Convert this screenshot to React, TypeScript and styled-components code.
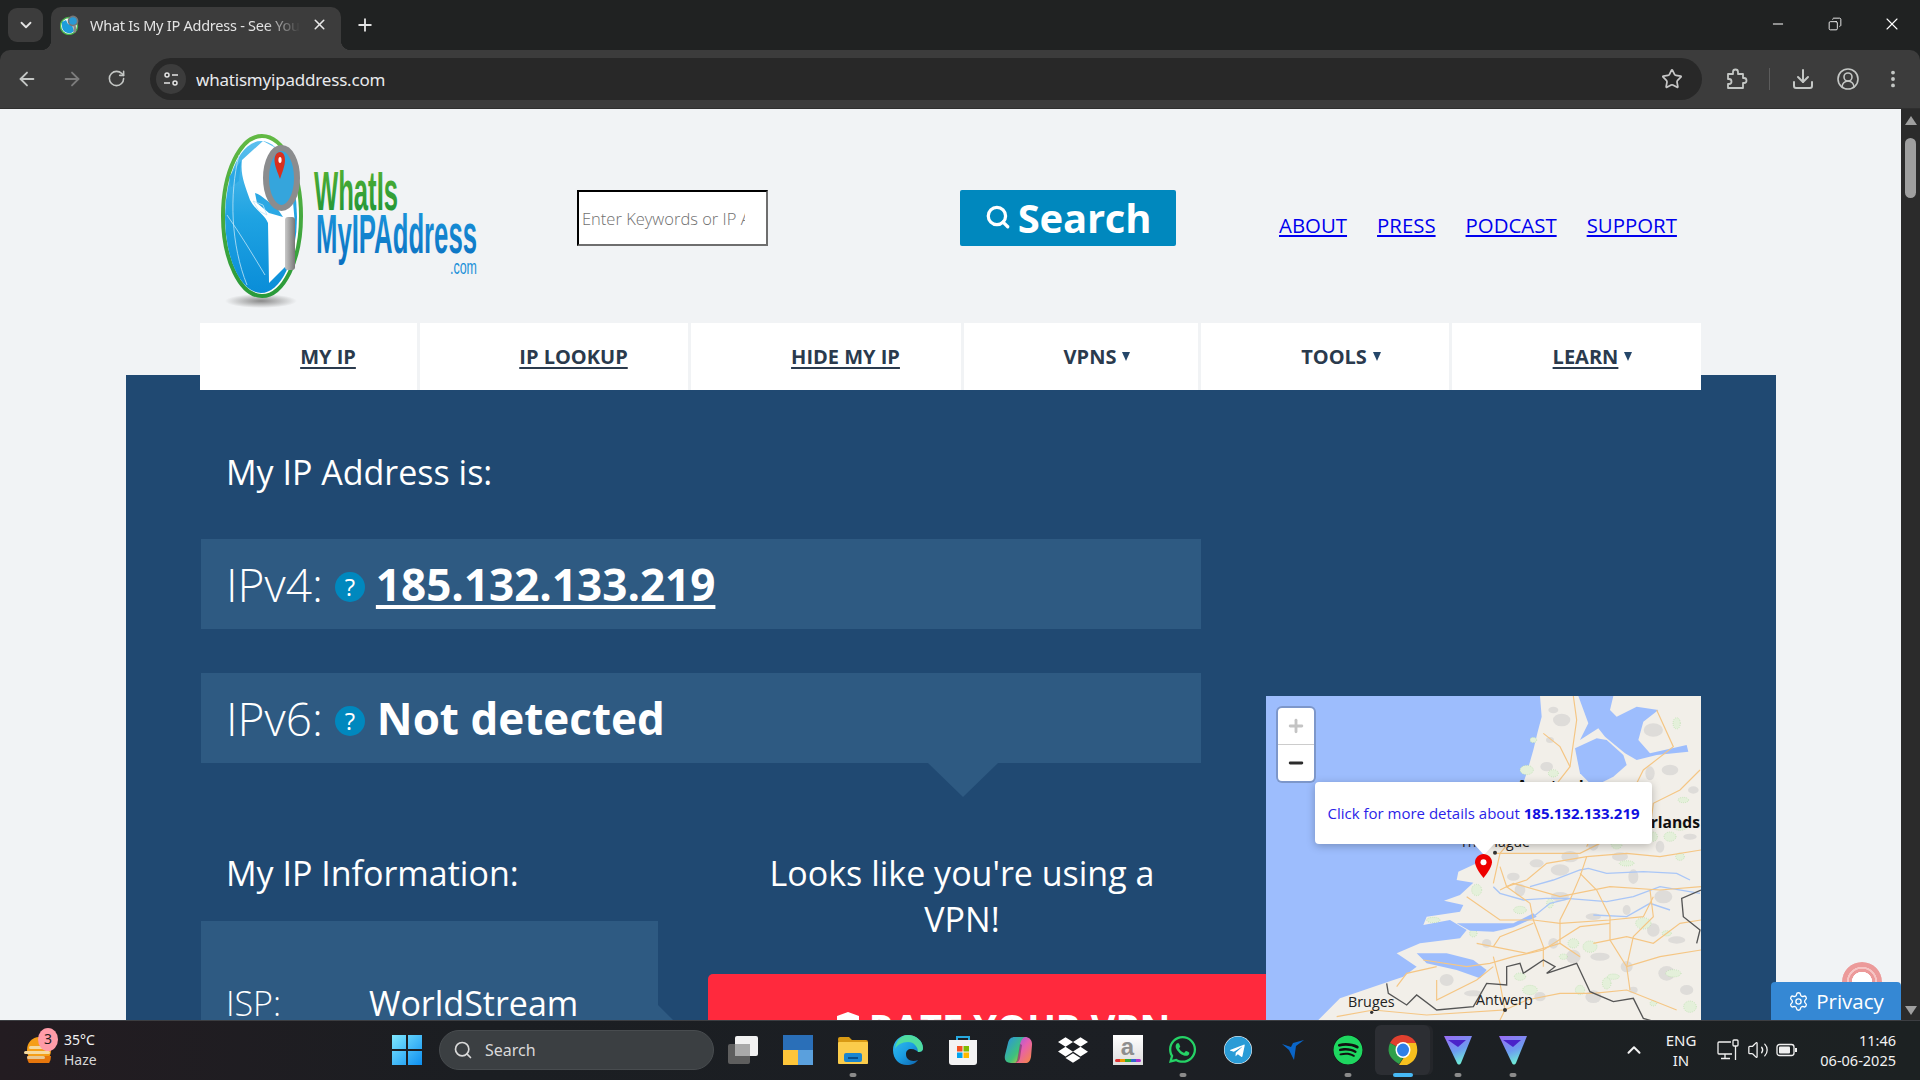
import React from "react";
import styled, { createGlobalStyle } from "styled-components";
import {
  ArrowLeft, ArrowRight, RotateCw, Star, MoreVertical, Search as SearchIcon, Settings,
  Plus, X, ChevronDown, ChevronUp, Minus, Volume2, Download, CircleUserRound, Copy,
} from "lucide-react";
import { FaWhatsapp, FaTelegram, FaSpotify, FaDropbox } from "react-icons/fa";

const Global = createGlobalStyle`
  html, body { margin: 0; padding: 0; width: 1920px; height: 1080px; overflow: hidden; background: #202222; }
  * { box-sizing: border-box; }
`;

const Screen = styled.div`
  width: 1920px; height: 1080px; display: flex; flex-direction: column; overflow: hidden;
  font-family: "Open Sans", "Liberation Sans", sans-serif;
`;

/* browser chrome */
const TitleBar = styled.div`
  height: 50px; flex: none; background: #202222; display: flex; align-items: flex-end; padding-left: 8px; position: relative;
`;
const TabToggle = styled.div`
  width: 35px; height: 34px; margin-bottom: 8px; border-radius: 9px; background: #3c3c3c; color: #e3e3e3;
  display: flex; align-items: center; justify-content: center;
`;
const Tab = styled.div`
  width: 290px; height: 43px; margin-left: 8px; background: #3c3c3c; border-radius: 10px 10px 0 0; position: relative;
  display: flex; align-items: center; padding: 0 10px 8px 9px; color: #e3e3e3;
  &::before, &::after { content: ""; position: absolute; bottom: 0; width: 10px; height: 10px; }
  &::before { left: -10px; background: radial-gradient(circle at 0 0, #202222 10px, #3c3c3c 10.5px); }
  &::after { right: -10px; background: radial-gradient(circle at 100% 0, #202222 10px, #3c3c3c 10.5px); }
`;
const TabTitle = styled.span`
  width: 210px; margin-left: 10px; white-space: nowrap; overflow: hidden; font: 400 14.5px "Noto Sans", sans-serif; letter-spacing: -0.25px;
  -webkit-mask-image: linear-gradient(to right, #000 175px, transparent 210px);
`;
const TabClose = styled.span`
  display: flex; margin-left: 11px; color: #e8e8e8;
`;
const NewTab = styled.span`
  display: flex; margin: 0 0 15px 14px; color: #e3e3e3;
`;
const WindowControls = styled.div`
  margin-left: auto; display: flex; height: 50px; color: #fff; padding-bottom: 2px;
`;
const WindowButton = styled.span`
  width: 57px; display: flex; align-items: center; justify-content: center;
`;
const Toolbar = styled.div`
  height: 59px; flex: none; background: #3c3c3c; border-radius: 10px 10px 0 0; display: flex; align-items: center;
  padding: 0 0 1px 0; color: #c4c7c5; border-bottom: 1px solid #2f2f2f;
`;
const NavIcon = styled.span<{ $dim?: boolean; $w?: number }>`
  width: ${(p) => p.$w ?? 46}px; display: flex; align-items: center; justify-content: center; flex: none;
  color: ${(p) => (p.$dim ? "#7c7c7c" : "#c4c7c5")};
`;
const AddressBar = styled.div`
  width: 1552px; height: 42px; margin-left: 8px; border-radius: 21px; background: #282828; display: flex; align-items: center; padding: 0 19px 0 6px; flex: none;
`;
const SiteInfo = styled.span`
  width: 30px; height: 30px; border-radius: 50%; background: #3c3c3c; display: flex; align-items: center; justify-content: center; color: #e3e3e3;
`;
const Url = styled.span`
  margin-left: 10px; padding-top: 1px; color: #e8eaed; font: 400 17px "Noto Sans", sans-serif; letter-spacing: -0.2px;
`;
const StarSlot = styled.span`
  margin-left: auto; display: flex; color: #c7c7c7;
`;
const ToolSep = styled.span`
  width: 1px; height: 22px; background: #5c5c5c; margin: 0 11px 0 0; flex: none;
`;

/* viewport */
const Viewport = styled.div`
  flex: 1; min-height: 0; display: flex; position: relative;
`;
const Page = styled.main`
  flex: 1; min-width: 0; background: #f1f3f5; overflow: hidden; position: relative;
`;
const ScrollTrack = styled.div`
  width: 19px; flex: none; background: #2b2b2b; position: relative; display: flex; flex-direction: column; align-items: center; justify-content: space-between; padding: 7px 0 5px;
`;
const ScrollThumb = styled.div`
  position: absolute; top: 29px; left: 4px; width: 11px; height: 60px; border-radius: 6px; background: #9f9f9f;
`;
const ScrollArrow = styled.div<{ $down?: boolean }>`
  width: 0; height: 0; border-left: 6px solid transparent; border-right: 6px solid transparent;
  ${(p) => (p.$down ? "border-top: 9px solid #9f9f9f;" : "border-bottom: 9px solid #9f9f9f;")}
`;

/* site header */
const SiteHeader = styled.header`
  height: 214px; padding: 16px 0 0 215px; display: flex; align-items: flex-start;
`;
const LogoSvg = styled.svg`
  width: 270px; height: 185px; flex: none; display: block;
`;
const SearchInput = styled.input`
  width: 191px; height: 56px; margin: 65px 0 0 92px; padding: 0 21px 0 3px; border-width: 2px; border-style: inset; border-color: #1f1f1f #6e6e6e #6e6e6e #1f1f1f;
  background: #fff; font: 300 16.5px "Open Sans", sans-serif; color: #333; outline: none;
  &::placeholder { color: #6f6f6f; opacity: 1; }
`;
const SearchButton = styled.button`
  width: 216px; height: 56px; margin: 65px 0 0 192px; border: none; border-radius: 2px; background: #0088be; color: #fff;
  font: 700 40px "Open Sans", sans-serif; display: flex; align-items: center; justify-content: center; gap: 7px; padding: 0 0 2px; letter-spacing: -0.2px;
`;
const TopLinks = styled.nav`
  margin: 86px 0 0 103px; display: flex; gap: 30px;
`;
const TopLink = styled.a`
  color: #0000ee; text-decoration: underline; font: 400 20.4px/28px "Open Sans", sans-serif;
`;

/* nav */
const MainNav = styled.nav`
  width: 1501px; height: 67px; margin-left: 200px; display: grid; grid-template-columns: 217px 3px 268px 3px 270px 3px 234px 3px 248px 3px 249px;
  position: relative; z-index: 1; background: #f1f3f5;
`;
const NavCell = styled.div<{ $caret?: boolean }>`
  background: #fff; display: flex; align-items: center; justify-content: center; padding-left: ${(p) => (p.$caret ? 32 : 39)}px; gap: 6px;
  color: #2a3a4d; font: 700 20px "Open Sans", sans-serif;
`;
const NavLabel = styled.span<{ $u?: boolean }>`
  text-decoration: ${(p) => (p.$u ? "underline" : "none")}; text-underline-offset: 3px;
`;
const NavCaret = styled.span`
  width: 0; height: 0; border-left: 4px solid transparent; border-right: 4px solid transparent; border-top: 9px solid #24476a;
`;

/* content */
const Panel = styled.section`
  width: 1650px; margin: -15px 0 0 126px; height: 700px; background: #204972; padding: 74px 0 0 75px; color: #fff;
  display: grid; grid-template-columns: 1065px 435px; align-items: start;
`;
const LeftColumn = styled.div``;
const Heading = styled.h2`
  margin: 0; padding-left: 25px; font: 400 34px/46px "Open Sans", sans-serif;
`;
const IpBox = styled.div<{ $arrow?: boolean }>`
  width: 1000px; height: 90px; margin-top: 44px; background: #2e5a82; display: flex; align-items: center; padding: 0 0 0 25px; position: relative;
  ${(p) =>
    p.$arrow
      ? `&::after { content: ""; position: absolute; top: 100%; left: 727px; border-left: 35px solid transparent; border-right: 35px solid transparent; border-top: 34px solid #2e5a82; }`
      : ""}
`;
const IpLabel = styled.span`
  font: 300 46px "Open Sans", sans-serif;
`;
const HelpBadge = styled.span`
  width: 30px; height: 30px; margin: 6px 11px 0 12px; border-radius: 50%; background: #0088be; color: #fff; font: 400 24px/30px "Open Sans", sans-serif; text-align: center; flex: none;
`;
const IpLink = styled.a`
  color: #fff; font: 700 44px "Open Sans", sans-serif; text-decoration: underline; text-decoration-thickness: 4px; text-underline-offset: 4px;
`;
const IpValue = styled.strong`
  font: 700 44px "Open Sans", sans-serif; margin-left: 1px;
`;
const InfoRow = styled.div`
  display: flex; margin-top: 87px;
`;
const InfoColumn = styled.div`
  width: 507px; flex: none;
`;
const InfoCard = styled.div`
  width: 480px; height: 160px; margin-top: 25px; background: #2e5a82; padding: 59px 0 0 25px; display: flex;
  clip-path: polygon(0 0, 457px 0, 457px 84px, 480px 107px, 480px 160px, 0 160px);
`;
const InfoKey = styled.span`
  width: 143px; font: 300 34px/46px "Open Sans", sans-serif;
`;
const InfoValue = styled.span`
  font: 400 34px/46px "Open Sans", sans-serif;
`;
const VpnColumn = styled.div`
  width: 558px; flex: none;
`;
const VpnText = styled.p`
  margin: 0 100px 0 50px; text-align: center; font: 400 34px/46px "Open Sans", sans-serif;
`;
const RateButton = styled.div`
  width: 590px; height: 100px; margin-top: 32px; background: #ff293d; border-radius: 5px 5px 0 0; display: flex; justify-content: center; align-items: flex-start; gap: 9px; padding-top: 28px;
  font: 700 38px/50px "Open Sans", sans-serif; color: #fff;
`;
const MapFrame = styled.div`
  width: 435px; height: 400px; margin-top: 247px; position: relative; z-index: 1; background: #9dbdfd; overflow: hidden;
`;
const MapSvg = styled.svg`
  display: block; width: 435px; height: 400px;
`;
const ZoomControl = styled.div`
  position: absolute; left: 12px; top: 12px; width: 36px; height: 73px; background: #fff; border-radius: 4px; box-shadow: 0 0 0 2px rgba(0,0,0,.2); display: flex; flex-direction: column;
`;
const ZoomButton = styled.span<{ $off?: boolean }>`
  flex: 1; display: flex; align-items: center; justify-content: center; color: ${(p) => (p.$off ? "#c4c4c4" : "#2c2c2c")};
  & + & { border-top: 1px solid #ccc; }
`;
const Popup = styled.div`
  position: absolute; left: 49px; top: 86px; width: 337px; height: 62px; background: #fff; border-radius: 4px; box-shadow: 0 2px 8px rgba(0,0,0,.25);
  display: flex; align-items: center; justify-content: center; font: 400 15px "Open Sans", sans-serif; color: #2b1fe8; white-space: pre;
  &::after { content: ""; position: absolute; top: 100%; left: 159px; border-left: 10px solid transparent; border-right: 10px solid transparent; border-top: 11px solid #fff; }
  strong { color: #1010e0; font-weight: 700; }
`;
const Marker = styled.svg`
  position: absolute; left: 209px; top: 158px; width: 17px; height: 24px;
`;
const PrivacyBadge = styled.div`
  position: absolute; right: 0; bottom: 0; width: 130px; height: 38px; background: #3588d4; border-radius: 4px 4px 0 0; color: #fff; display: flex; align-items: center; justify-content: center; gap: 7px; font: 400 20.5px "Open Sans", sans-serif; z-index: 3;
`;
const AlertRings = styled.div`
  position: absolute; right: 19px; bottom: 38px; width: 40px; height: 20px; z-index: 2; border-radius: 20px 20px 0 0;
  background: radial-gradient(circle at 50% 100%, #fff 0 10px, #ec9a9a 10.5px 13px, #f6c5c5 13.5px 15px, #ec9a9a 15.5px 20px, transparent 20.5px);
`;

/* taskbar */
const Taskbar = styled.footer`
  height: 60px; flex: none; position: relative; display: flex; align-items: center; color: #f2f2f2; padding-bottom: 2px;
  background: linear-gradient(90deg, #231c21 0, #1b1e22 25%, #1c1f24 60%, #1c2122 100%); border-top: 1px solid #3c3e42;
  font-family: "Noto Sans", "Open Sans", sans-serif;
`;
const Weather = styled.div`
  width: 116px; height: 100%; padding-left: 24px; display: flex; align-items: center; flex: none; position: relative;
`;
const WeatherBadge = styled.span`
  position: absolute; left: 38px; top: 7px; width: 20px; height: 23px; border-radius: 50%; background: #ff9ca8; color: #1d1d1d; font-size: 14px; line-height: 22px; text-align: center;
`;
const WeatherText = styled.div`
  margin-left: 12px; font-size: 14px; line-height: 20px; white-space: nowrap; span { display: block; color: #d6d6d6; }
`;
const StartIcon = styled.svg`
  width: 30px; height: 30px; margin-left: 276px; flex: none;
`;
const TaskSearch = styled.div`
  width: 275px; height: 40px; margin-left: 17px; flex: none; border-radius: 20px; background: #3b3f42; border: 1px solid #484c4f; display: flex; align-items: center; gap: 12px; padding-left: 13px; color: #d9d9d9; font-size: 16px;
`;
const TaskApps = styled.div`
  display: flex; margin-left: 1px; height: 100%;
`;
const TaskApp = styled.div<{ $on?: boolean }>`
  width: 55px; height: 100%; display: flex; align-items: center; justify-content: center; position: relative; flex: none;
  ${(p) => (p.$on ? `&::before { content: ""; position: absolute; left: 0; right: 0; top: 4px; bottom: 3px; background: #2c2e33; border-radius: 6px; box-shadow: 3px 0 0 #24262a; }` : "")}
  > * { position: relative; }
`;
const RunDot = styled.span<{ $on?: boolean }>`
  position: absolute !important; bottom: 1px; left: 50%; height: 4px; border-radius: 2px; transform: translateX(-50%);
  width: ${(p) => (p.$on ? 20 : 7)}px; background: ${(p) => (p.$on ? "#47b9f5" : "#8b8b8b")};
`;
const Tray = styled.div`
  position: absolute; right: 0; top: 0; bottom: 2px; display: flex; align-items: center;
`;
const TrayLang = styled.div`
  width: 32px; margin-left: 20px; text-align: center; font-size: 15px; line-height: 20px;
`;
const TrayIcons = styled.div`
  display: flex; align-items: center; gap: 7px; margin-left: 20px;
`;
const Clock = styled.div`
  width: 90px; margin: 0 24px 0 8px; text-align: right; font-size: 14.5px; line-height: 20px; white-space: nowrap;
`;
const AmazonTile = styled.div`
  width: 30px; height: 30px; background: linear-gradient(#fff, #ddd); color: #8e8e8e; font: 700 24px/24px "Liberation Sans", sans-serif; text-align: center; position: relative;
  i { position: absolute; left: 2px; right: 2px; bottom: 3px; height: 3px; background: linear-gradient(90deg,#d33 0 20%,#e90 20% 40%,#3a3 40% 60%,#36c 60% 80%,#a3c 80%); border-radius: 2px; }
`;

const Globe = ({ size = 20 }: { size?: number }) => (
  <svg width={size} height={size} viewBox="0 0 20 20">
    <circle cx="9" cy="11" r="8.5" fill="#fff" stroke="#45b04a" strokeWidth="1.4" />
    <path d="M2 11a7 7 0 0 0 12 5l-2-6-4-1-2-4-4 2z" fill="#1d9ddc" />
    <circle cx="13" cy="6" r="4.6" fill="#2a9ad4" stroke="#777" strokeWidth="1.6" />
    <rect x="13.4" y="10.5" width="2.6" height="7" rx="1" fill="#888" />
  </svg>
);

const Logo = () => (
  <LogoSvg viewBox="0 0 270 185">
    <defs>
      <linearGradient id="gr" x1="0" y1="0" x2="0" y2="1"><stop offset="0" stopColor="#5cb531" /><stop offset="1" stopColor="#18913a" /></linearGradient>
      <linearGradient id="bl" x1="0" y1="0" x2="0" y2="1"><stop offset="0" stopColor="#1d9ade" /><stop offset="1" stopColor="#0a6fc0" /></linearGradient>
      <linearGradient id="gb" x1="0" y1="0" x2="0" y2="1"><stop offset="0" stopColor="#5cc0ee" /><stop offset=".5" stopColor="#1fa3e2" /><stop offset="1" stopColor="#0a8dd8" /></linearGradient>
      <linearGradient id="rg" x1="0" y1="0" x2="0" y2="1"><stop offset="0" stopColor="#62b944" /><stop offset="1" stopColor="#2a9a3a" /></linearGradient>
      <radialGradient id="sh"><stop offset="0" stopColor="#8a8a8a" /><stop offset="1" stopColor="#f1f3f5" /></radialGradient>
      <linearGradient id="hn" x1="0" y1="0" x2="1" y2="0"><stop offset="0" stopColor="#c9c9c9" /><stop offset="1" stopColor="#777" /></linearGradient>
    </defs>
    <ellipse cx="46" cy="176" rx="36" ry="7" fill="url(#sh)" />
    <ellipse cx="47" cy="91" rx="39" ry="80" fill="#fff" stroke="url(#rg)" strokeWidth="4" />
    <ellipse cx="46" cy="92" rx="36" ry="76" fill="url(#gb)" />
    <path d="M27 35 L48 16 L74 30 L80 100 L72 140 L54 158 L53 98 C50 90 40 85 35 75 C30 60 25 50 27 35z" fill="#fff" />
    <path d="M14 52l12-16-2 20-8 6zM40 68c8 2 12 10 20 12l8 12-14-4-12-10z" fill="#2ba8e4" />
    <path d="M38 76l10 4 4 10-8-4zM12 90c14 20 26 40 38 60M24 30c-10 40-8 90 8 130" fill="none" stroke="#bfe4f6" strokeWidth=".8" />
    <ellipse cx="66.5" cy="53" rx="15.5" ry="30" fill="#35a5dc" stroke="#8b8c8e" strokeWidth="6" />
    <path d="M65 27c-3.6 0-5.5 4-5.5 8 0 6 3.5 13 5.5 19 2-6 5-13 5-19 0-4-1.5-8-5-8z" fill="#d9301e" />
    <ellipse cx="65" cy="35" rx="1.6" ry="3" fill="#fff" />
    <rect x="70" y="92" width="10" height="53" rx="3" fill="url(#hn)" />
    <text x="99" y="85" fontFamily="Liberation Sans" fontWeight="700" fontSize="56" fill="url(#gr)" textLength="84" lengthAdjust="spacingAndGlyphs">WhatIs</text>
    <text x="101" y="128" fontFamily="Liberation Sans" fontWeight="700" fontSize="56" fill="url(#bl)" textLength="161" lengthAdjust="spacingAndGlyphs">MyIPAddress</text>
    <text x="235" y="149" fontFamily="Liberation Sans" fontSize="21" fill="#1a8fd8" textLength="27" lengthAdjust="spacingAndGlyphs">.com</text>
  </LogoSvg>
);

const grey = "870,150 860,230 905,90 880,60 835,300 1180,120 1120,100 1230,240 1170,250 830,520 900,540 1000,460 1080,500 1200,470 1290,440 900,620 780,600 1000,680 1100,660 1180,720 1250,750 880,760 940,800 1020,800 1100,830 1220,850 680,760 560,870 640,910 840,920 1000,920 1120,900 1280,900 1210,620 1300,300 1120,300 1040,400 760,560 930,500 1120,560".split(" ").map((s) => s.split(",").map(Number));
const green = "820,150 880,250 800,240 1250,100 1270,330 1260,410 1180,440 1070,460 1100,520 1260,500 1230,440 1150,700 1220,730 780,660 870,640 650,600 520,690 640,730 940,760 990,770 910,800 780,860 810,900 1040,880 1060,860 1240,850 960,900 1290,950 1180,940".split(" ").map((s) => s.split(",").map(Number));
const roads = [
  "940,18 950,90 930,230 860,320 780,420 720,490 700,580",
  "1190,60 1240,170 1150,240 1120,300 1040,330 980,470",
  "1320,240 1260,300 1180,340 1170,420 1060,440 960,490 840,490 700,490",
  "720,530 740,590 800,570 860,520 980,500 1100,490 1200,500 1323,480",
  "980,500 960,560 930,630 900,690 900,760 960,800",
  "960,550 1010,600 1050,680 1050,750 1100,830 1110,900",
  "740,590 810,640 820,690 850,770 850,830",
  "720,600 760,580 900,620 1050,590 1200,600 1323,590",
  "620,620 720,690 820,690 900,700 1050,690 1150,680 1180,620",
  "700,770 720,740 820,700",
  "490,810 620,830 690,820 760,800 850,780 960,710 1050,700",
  "530,870 530,930 650,870 700,830",
  "1170,600 1180,680 1120,740 1100,830 1200,800 1323,780",
  "735,960 800,930 900,910 1000,910 1100,900 1250,960",
  "735,960 720,880 700,800",
  "230,980 340,960 500,975 735,960 720,990",
  "410,890 440,850 530,830",
  "1000,760 1100,740 1180,760 1260,700 1323,690",
  "900,760 800,790 700,770 650,760",
  "850,130 900,170 930,230",
];
const rivers = [
  "810,590 880,570 960,540 985,535 1040,550 1150,545 1250,550 1290,570",
  "700,590 720,610 790,630 860,625 920,625 1040,635 1120,620 1200,590 1320,610",
  "1000,675 1100,680 1170,640 1230,660",
  "820,680 870,640 930,625",
];

const LeafletMap = () => (
  <MapSvg viewBox="18 18 1305 1200">
    <path
      d="M840 18 L845 80 L832 130 L820 180 L800 250 L775 320 L730 400 L690 470 L650 520 L595 545 L590 570 L640 578 L600 615 L552 632 L610 645 L600 665 L500 680 L490 705 L570 690 L620 720 L600 745 L480 760 L410 790 L470 830 L430 860 L385 875 L240 925 L175 990 L175 1218 L1323 1218 L1323 18 Z"
      fill="#f2efe9"
    />
    {grey.map(([x, y], i) => (
      <ellipse key={i} cx={x} cy={y} rx={12 + ((i * 7) % 18)} ry={9 + ((i * 5) % 14)} fill="#dedcd9" />
    ))}
    {green.map(([x, y], i) => (
      <ellipse key={i} cx={x} cy={y} rx={10 + ((i * 5) % 14)} ry={8 + ((i * 3) % 12)} fill="#e4f0da" stroke="#a6da98" strokeWidth="2" strokeDasharray="2 4" />
    ))}
    <path
      d="M955 18 L985 100 L960 150 L1015 115 L1035 140 L1095 190 L1130 210 L1190 195 L1285 185 L1280 165 L1170 190 L1135 150 L1150 95 L1195 60 L1130 50 L1070 80 L1050 60 L1060 18 Z"
      fill="#9dbdfd"
    />
    <path d="M945 175 L1010 145 L1040 150 L1090 195 L1100 225 L1060 260 L1000 290 L960 250 Z" fill="#9dbdfd" />
    <path d="M470 790 L560 790 L640 810 L680 840 L660 865 L590 840 L500 820 Z" fill="#9dbdfd" />
    <path d="M590 700 L720 700 L760 700 L820 670 L830 680 L760 712 L700 725 L630 722 Z" fill="#9dbdfd" />
    {rivers.map((p, i) => (
      <polyline key={i} points={p} fill="none" stroke="#a9c6f7" strokeWidth="4" />
    ))}
    {roads.map((p, i) => (
      <polyline key={i} points={p} fill="none" stroke="#f5c684" strokeWidth="3.5" />
    ))}
    <polyline
      points="380,880 385,910 440,945 470,915 530,960 640,950 680,880 740,885 740,830 780,820 790,850 850,810 885,830 860,850 950,820 990,905 1060,935 1120,925 1150,985 1200,1000"
      fill="none" stroke="#555" strokeWidth="4"
    />
    <polyline points="1323,600 1265,625 1270,680 1320,720 1310,760" fill="none" stroke="#555" strokeWidth="4" />
    <text x="600" y="472" fontFamily="Open Sans" fontSize="42" fill="#222">The Hague</text>
    <circle cx="705" cy="488" r="6" fill="#333" />
    <text x="1172" y="414" fontFamily="Open Sans" fontWeight="700" fontSize="47" fill="#111">rlands</text>
    <text x="770" y="305" fontFamily="Open Sans" fontWeight="700" fontSize="47" fill="#111">Amsterdam</text>
    <text x="264" y="952" fontFamily="Open Sans" fontSize="43" fill="#222">Bruges</text>
    <circle cx="335" cy="967" r="5" fill="#333" />
    <text x="648" y="945" fontFamily="Open Sans" fontSize="43" fill="#222">Antwerp</text>
    <circle cx="735" cy="960" r="6" fill="#333" />
  </MapSvg>
);

const PuzzleIcon = () => (
  <svg width="24" height="24" viewBox="0 0 24 24" fill="none" stroke="currentColor" strokeWidth="1.8" strokeLinejoin="round">
    <path d="M4 7h5V5a2.5 2.5 0 0 1 5 0v2h5v4h1a2.5 2.5 0 0 1 0 5h-1v5H4v-4h1a2.5 2.5 0 0 0 0-5H4z" />
  </svg>
);
const TaskViewIcon = () => (
  <svg width="30" height="28" viewBox="0 0 30 28">
    <rect x="0" y="8" width="22" height="20" rx="2" fill="#5e5e5e" />
    <rect x="7" y="0" width="23" height="20" rx="2" fill="#f2f2f2" />
    <rect x="7" y="8" width="15" height="12" fill="#a9a9a9" />
  </svg>
);
const EdgeIcon = () => (
  <svg width="30" height="32" viewBox="0 0 30 32">
    <defs><linearGradient id="ed" x1="0" y1="0" x2="1" y2="1"><stop offset="0" stopColor="#35c1f1" /><stop offset=".5" stopColor="#1b9de2" /><stop offset="1" stopColor="#0c59a4" /></linearGradient></defs>
    <path d="M15 1C6 1 0 8 0 16c0 9 6 15 14 15 5 0 9-2 11-5-5 2-12 1-12-6 0-3 2-5 5-5 4 0 6 2 7 3 3 0 5-1 5-4C30 7 23 1 15 1z" fill="url(#ed)" />
    <path d="M15 1c8 0 15 6 15 13 0 3-2 4-5 4 0-5-4-10-10-10-6 0-11 3-13 7C3 7 8 1 15 1z" fill="#4fdca0" />
  </svg>
);
const ChromeIcon = () => (
  <svg width="30" height="32" viewBox="0 0 30 32">
    <path d="M15 16L2 9C5 3 10 1 15 1s11 3 13 8H15z" fill="#e0402f" />
    <path d="M15 16L2 9c-3 7-2 15 9 21l6-9z" fill="#2fa04a" />
    <path d="M15 9h13c3 8 1 18-9 22h-8l7-11z" fill="#f6bf1e" />
    <ellipse cx="15" cy="16" rx="7.5" ry="8" fill="#fff" />
    <ellipse cx="15" cy="16" rx="6" ry="6.5" fill="#2f7fe8" />
  </svg>
);
const ProtonIcon = ({ id }: { id: string }) => (
  <svg width="30" height="32" viewBox="0 0 30 32">
    <defs><linearGradient id={id} x1="0" y1="0" x2="0.4" y2="1"><stop offset="0" stopColor="#9a6bf5" /><stop offset=".6" stopColor="#6d9cf0" /><stop offset="1" stopColor="#6fe7d8" /></linearGradient></defs>
    <path d="M1 2h28l-11 27c-1 2-3 2-4 0z" fill={`url(#${id})`} />
    <path d="M5 6h18l-8 7z" fill="#4a23c9" />
  </svg>
);
const WidgetsIcon = () => (
  <svg width="30" height="30" viewBox="0 0 30 30">
    <rect width="30" height="15" fill="#2a6fb8" />
    <rect y="15" width="15" height="15" fill="#fdc53a" />
    <rect x="15" y="15" width="15" height="15" fill="#5aa0dd" />
  </svg>
);
const ExplorerIcon = () => (
  <svg width="30" height="28" viewBox="0 0 30 28">
    <path d="M0 3a2 2 0 0 1 2-2h9l3 3h14a2 2 0 0 1 2 2v20a2 2 0 0 1-2 2H2z" fill="#d99a14" />
    <rect y="6" width="30" height="22" rx="1" fill="#fbcc4b" />
    <rect x="6" y="17" width="18" height="9" rx="2" fill="#1a86d0" />
    <rect x="10" y="21" width="10" height="2" fill="#0a4f8a" />
  </svg>
);
const StoreIcon = () => (
  <svg width="30" height="32" viewBox="0 0 30 32">
    <path d="M9 6V3h12v3" fill="none" stroke="#27a9e0" strokeWidth="2" />
    <path d="M1 6h28v22a3 3 0 0 1-3 3H4a3 3 0 0 1-3-3z" fill="#f3f3f3" />
    <rect x="9" y="12" width="5.5" height="5.5" fill="#f25022" />
    <rect x="15.5" y="12" width="5.5" height="5.5" fill="#7fba00" />
    <rect x="9" y="18.5" width="5.5" height="5.5" fill="#00a4ef" />
    <rect x="15.5" y="18.5" width="5.5" height="5.5" fill="#ffb900" />
  </svg>
);
const CopilotIcon = () => (
  <svg width="30" height="30" viewBox="0 0 30 30">
    <defs>
      <linearGradient id="c1" x1="0" y1="0" x2="1" y2="1"><stop offset="0" stopColor="#2a8fe8" /><stop offset=".6" stopColor="#3ec27a" /><stop offset="1" stopColor="#f4c12b" /></linearGradient>
      <linearGradient id="c2" x1="0" y1="0" x2="1" y2="1"><stop offset="0" stopColor="#7a5cf0" /><stop offset=".5" stopColor="#e65fb0" /><stop offset="1" stopColor="#f78a3c" /></linearGradient>
    </defs>
    <path d="M20 2c-3 0-5 2-5.5 5L12 23c-.5 3-2 5-4 5h14c4 0 5-2 6-6l1-12c.5-5-3-8-7-8z" fill="url(#c2)" />
    <path d="M12 2c-4 0-6 2-7 6L2 20c-1 5 1 8 6 8h3c2 0 4-2 4-5l2-13c.5-4 2-7 5-8z" fill="url(#c1)" />
    <path d="M17 9l-2.5 14c-.3 2-1 3.5-2 4.5 2 0 4-1.5 4.5-4.5L19 10z" fill="#1c1f24" opacity=".35" />
  </svg>
);
const BirdIcon = () => (
  <svg width="22" height="24" viewBox="0 0 22 24">
    <path d="M0 6l9 3 2-4 11-3-8 6-2 14-5-10z" fill="#0a66c9" />
  </svg>
);
const WeatherIcon = () => (
  <svg width="28" height="26" viewBox="0 0 28 26">
    <ellipse cx="15" cy="13" rx="12" ry="13" fill="#f59e17" />
    <path d="M3 19a12 13 0 0 0 24 0z" fill="#e6760c" />
    <rect x="5" y="9" width="20" height="3" rx="1.5" fill="#f5d99e" />
    <rect x="0" y="14" width="26" height="3" rx="1.5" fill="#f5d99e" />
    <rect x="3" y="19" width="18" height="3" rx="1.5" fill="#e8c690" />
  </svg>
);
const NetworkIcon = () => (
  <svg width="23" height="22" viewBox="0 0 23 22" fill="none" stroke="#f0f0f0" strokeWidth="1.3">
    <path d="M14 3H2a1 1 0 0 0-1 1v10a1 1 0 0 0 1 1h13" />
    <path d="M8 15v4M4 19.5h9" />
    <rect x="16" y="1" width="5" height="6" rx="1" />
    <path d="M18.5 7v14" />
  </svg>
);
const BatteryIcon = () => (
  <svg width="22" height="16" viewBox="0 0 22 16" fill="none" stroke="#f0f0f0" strokeWidth="1.3">
    <rect x="1" y="2.5" width="17" height="11" rx="2.5" />
    <rect x="3" y="4.5" width="11" height="7" rx="1" fill="#f0f0f0" stroke="none" />
    <path d="M20 6v4" strokeWidth="2" />
  </svg>
);

const navItems = [
  { label: "MY IP", u: true },
  { label: "IP LOOKUP", u: true },
  { label: "HIDE MY IP", u: true },
  { label: "VPNS", caret: true },
  { label: "TOOLS", caret: true },
  { label: "LEARN", u: true, caret: true },
];

const apps: { icon: React.ReactNode; dot?: boolean; on?: boolean }[] = [
  { icon: <TaskViewIcon /> },
  { icon: <WidgetsIcon /> },
  { icon: <ExplorerIcon />, dot: true },
  { icon: <EdgeIcon /> },
  { icon: <StoreIcon /> },
  { icon: <CopilotIcon /> },
  { icon: <FaDropbox size={30} color="#fff" /> },
  { icon: <AmazonTile>a<i /></AmazonTile> },
  { icon: <FaWhatsapp size={31} color="#25d366" />, dot: true },
  { icon: <FaTelegram size={28} color="#2a9bd6" style={{ background: "#fff", borderRadius: "50%" }} /> },
  { icon: <BirdIcon /> },
  { icon: <FaSpotify size={30} color="#1ed760" style={{ background: "#111", borderRadius: "50%" }} />, dot: true },
  { icon: <ChromeIcon />, dot: true, on: true },
  { icon: <ProtonIcon id="pv1" />, dot: true },
  { icon: <ProtonIcon id="pv2" />, dot: true },
];

export default function App() {
  return (
    <Screen>
      <Global />
      <TitleBar>
        <TabToggle><ChevronDown size={18} strokeWidth={2.4} /></TabToggle>
        <Tab>
          <Globe />
          <TabTitle>What Is My IP Address - See Your Public</TabTitle>
          <TabClose><X size={17} strokeWidth={2.2} /></TabClose>
        </Tab>
        <NewTab><Plus size={20} strokeWidth={2.2} /></NewTab>
        <WindowControls>
          <WindowButton><Minus size={16} strokeWidth={1.5} /></WindowButton>
          <WindowButton><Copy size={14} strokeWidth={1.5} style={{ transform: "scaleX(-1)" }} /></WindowButton>
          <WindowButton><X size={20} strokeWidth={1.3} /></WindowButton>
        </WindowControls>
      </TitleBar>
      <Toolbar>
        <NavIcon $w={53}><ArrowLeft size={22} /></NavIcon>
        <NavIcon $dim $w={38}><ArrowRight size={22} /></NavIcon>
        <NavIcon $w={51}><RotateCw size={19} /></NavIcon>
        <AddressBar>
          <SiteInfo>
            <svg width="16" height="16" viewBox="0 0 16 16" fill="none" stroke="#e3e3e3" strokeWidth="1.5">
              <circle cx="4" cy="4" r="2" /><path d="M9 4h6M1 12h6" /><circle cx="12" cy="12" r="2" />
            </svg>
          </SiteInfo>
          <Url>whatismyipaddress.com</Url>
          <StarSlot><Star size={22} strokeWidth={1.9} /></StarSlot>
        </AddressBar>
        <NavIcon $w={67}><PuzzleIcon /></NavIcon>
        <ToolSep />
        <NavIcon $w={44}><Download size={24} strokeWidth={2} /></NavIcon>
        <NavIcon $w={46}><CircleUserRound size={24} strokeWidth={1.6} /></NavIcon>
        <NavIcon $w={44}><MoreVertical size={22} strokeWidth={2.2} /></NavIcon>
      </Toolbar>
      <Viewport>
        <Page>
          <SiteHeader>
            <Logo />
            <SearchInput placeholder="Enter Keywords or IP Address" readOnly />
            <SearchButton><SearchIcon size={26} strokeWidth={3} />Search</SearchButton>
            <TopLinks>
              <TopLink>ABOUT</TopLink>
              <TopLink>PRESS</TopLink>
              <TopLink>PODCAST</TopLink>
              <TopLink>SUPPORT</TopLink>
            </TopLinks>
          </SiteHeader>
          <MainNav>
            {navItems.map((n, i) => (
              <React.Fragment key={n.label}>
                {i > 0 && <span />}
                <NavCell $caret={n.caret}>
                  <NavLabel $u={n.u}>{n.label}</NavLabel>
                  {n.caret && <NavCaret />}
                </NavCell>
              </React.Fragment>
            ))}
          </MainNav>
          <Panel>
            <LeftColumn>
              <Heading>My IP Address is:</Heading>
              <IpBox>
                <IpLabel>IPv4:</IpLabel>
                <HelpBadge>?</HelpBadge>
                <IpLink>185.132.133.219</IpLink>
              </IpBox>
              <IpBox $arrow>
                <IpLabel>IPv6:</IpLabel>
                <HelpBadge>?</HelpBadge>
                <IpValue>Not detected</IpValue>
              </IpBox>
              <InfoRow>
                <InfoColumn>
                  <Heading>My IP Information:</Heading>
                  <InfoCard>
                    <InfoKey>ISP:</InfoKey>
                    <InfoValue>WorldStream</InfoValue>
                  </InfoCard>
                </InfoColumn>
                <VpnColumn>
                  <VpnText>Looks like you're using a VPN!</VpnText>
                  <RateButton>
                    <svg width="24" height="30" viewBox="0 0 24 30" fill="#fff" style={{ marginTop: 10 }}>
                      <path d="M12 0l11 4v13c0 6-6 10-11 13C7 27 1 23 1 17V4z" />
                    </svg>
                    RATE YOUR VPN
                  </RateButton>
                </VpnColumn>
              </InfoRow>
            </LeftColumn>
            <MapFrame>
              <LeafletMap />
              <ZoomControl>
                <ZoomButton $off><Plus size={20} strokeWidth={3.4} /></ZoomButton>
                <ZoomButton><Minus size={20} strokeWidth={3.4} /></ZoomButton>
              </ZoomControl>
              <Popup>Click for more details about <strong>185.132.133.219</strong></Popup>
              <Marker viewBox="0 0 17 24">
                <path d="M8.5 0C3.8 0 0 3.7 0 8.3 0 14 8.5 24 8.5 24S17 14 17 8.3C17 3.7 13.2 0 8.5 0z" fill="#ee0000" />
                <circle cx="8.5" cy="8.3" r="3" fill="#fff" />
              </Marker>
            </MapFrame>
          </Panel>
          <AlertRings />
          <PrivacyBadge><Settings size={21} strokeWidth={1.5} />Privacy</PrivacyBadge>
        </Page>
        <ScrollTrack>
          <ScrollArrow />
          <ScrollThumb />
          <ScrollArrow $down />
        </ScrollTrack>
      </Viewport>
      <Taskbar>
        <Weather>
          <WeatherIcon />
          <WeatherBadge>3</WeatherBadge>
          <WeatherText>35°C<span>Haze</span></WeatherText>
        </Weather>
        <StartIcon viewBox="0 0 30 30">
          <defs><linearGradient id="win" x1="0" y1="0" x2="1" y2="1"><stop offset="0" stopColor="#7fe8ff" /><stop offset="1" stopColor="#0d8ff0" /></linearGradient></defs>
          <path d="M0 0h14v14H0zM16 0h14v14H16zM0 16h14v14H0zM16 16h14v14H16z" fill="url(#win)" />
        </StartIcon>
        <TaskSearch><SearchIcon size={20} strokeWidth={2} />Search</TaskSearch>
        <TaskApps>
          {apps.map((a, i) => (
            <TaskApp key={i} $on={a.on}>
              {a.icon}
              {a.dot && <RunDot $on={a.on} />}
            </TaskApp>
          ))}
        </TaskApps>
        <Tray>
          <ChevronUp size={22} strokeWidth={2.2} />
          <TrayLang>ENG<br />IN</TrayLang>
          <TrayIcons>
            <NetworkIcon />
            <Volume2 size={22} strokeWidth={1.4} />
            <BatteryIcon />
          </TrayIcons>
          <Clock>11:46<br />06-06-2025</Clock>
        </Tray>
      </Taskbar>
    </Screen>
  );
}
